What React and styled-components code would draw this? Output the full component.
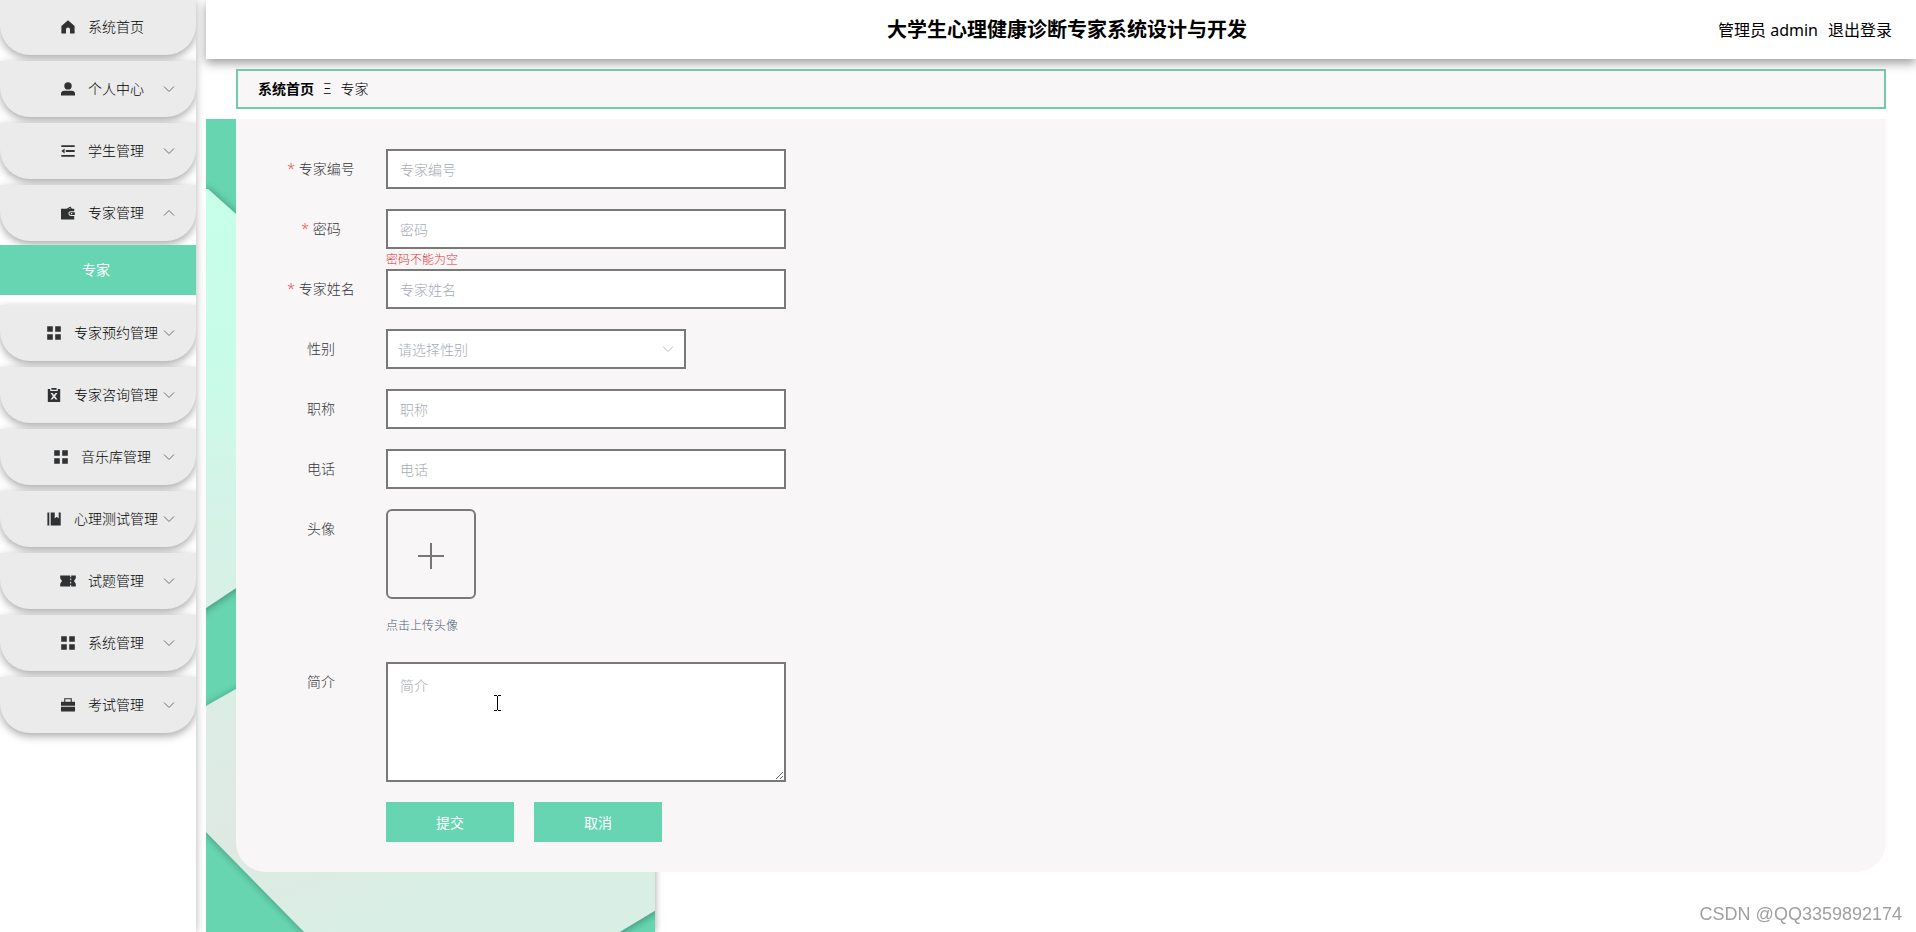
import { useState } from 'react';
import styled, { createGlobalStyle } from 'styled-components';

const GlobalStyle = createGlobalStyle`
  * {
    box-sizing: border-box;
  }
  body {
    margin: 0;
    background: #fff;
    font-family: "Noto Sans", "Noto Sans CJK SC", sans-serif;
    font-size: 14px;
    font-weight: 300;
    color: #000;
  }
  button, input, select, textarea {
    font-family: inherit;
    font-size: 14px;
    font-weight: inherit;
  }
`;

const Page = styled.div`
  display: flex;
  gap: 10px;
  min-height: 100vh;
`;

const Sidebar = styled.nav`
  flex: 0 0 196px;
  overflow: hidden;
  background: #fff;
  box-shadow: 0 0 8px rgba(0, 0, 0, 0.3);
`;

const Menu = styled.ul`
  display: flex;
  flex-direction: column;
  gap: 6px;
  margin: -1px 0 0;
  padding: 0;
  list-style: none;
`;

const MenuButton = styled.button`
  display: grid;
  grid-template-columns: 1fr auto 1fr;
  align-items: center;
  width: 100%;
  height: 56px;
  padding: 0 21px 0 25px;
  border: 0;
  border-radius: 0 0 30px 30px;
  background: #ebebeb;
  box-shadow: 0 3px 8px rgba(0, 0, 0, 0.35);
  color: #000;
  cursor: pointer;
`;

const MenuLabel = styled.span`
  grid-column: 2;
  display: flex;
  align-items: center;
  gap: 13px;
  padding-left: 5px;
  line-height: 20px;
  white-space: nowrap;
`;

const Arrow = styled.svg`
  grid-column: 3;
  justify-self: end;
  width: 12px;
  height: 12px;
  margin-left: -12px;
  fill: none;
  stroke: #6c6f75;
  transform: rotate(${(props) => (props.$open ? '180deg' : '0')});
`;

const SubMenu = styled.ul`
  margin: 0;
  padding: 4px 0;
  list-style: none;
`;

const SubLink = styled.a`
  display: block;
  padding-right: 4px;
  line-height: 50px;
  text-align: center;
  text-decoration: none;
  font-weight: 400;
  color: #fff;
  background: #67d5b1;
`;

const Main = styled.div`
  flex: 1;
  display: flex;
  flex-direction: column;
  min-width: 0;
`;

const Header = styled.header`
  display: grid;
  grid-template-columns: 1fr auto 1fr;
  align-items: center;
  height: 59px;
  padding: 0 24px 0 36px;
  background: #fff;
  box-shadow: 0 4px 10px rgba(0, 0, 0, 0.4);
`;

const Title = styled.h1`
  grid-column: 2;
  margin: 0;
  font-size: 20px;
  line-height: 30px;
`;

const UserBar = styled.div`
  justify-self: end;
  display: flex;
  gap: 10px;
  font-size: 16px;
  font-weight: 400;
  line-height: 24px;
`;

const Logout = styled.a`
  color: inherit;
  text-decoration: none;
`;

const Breadcrumb = styled.nav`
  display: flex;
  align-items: center;
  gap: 9px;
  height: 40px;
  margin: 10px 30px;
  padding: 0 20px;
  border: 2px solid #74c9aa;
  background: #f8f6f7;
  line-height: 20px;
`;

const HomeLink = styled.a`
  font-weight: bold;
  color: inherit;
  text-decoration: none;
`;

const Workspace = styled.main`
  flex: 1;
  display: grid;
  grid-template-columns: minmax(0, 1fr);
  align-items: start;
`;

const Backdrop = styled.svg`
  grid-area: 1 / 1;
  width: 460px;
  height: 813px;
`;

const Card = styled.form`
  grid-area: 1 / 1;
  margin: 0 30px 60px;
  padding: 30px 20px;
  border-radius: 0 0 30px 30px;
  background: #f8f6f7;
`;

const Row = styled.div`
  display: grid;
  grid-template-columns: 130px minmax(0, 400px);
`;

const Label = styled.label`
  display: flex;
  justify-content: center;
  gap: 4px;
  height: 40px;
  line-height: 40px;
  color: #36383c;
`;

const Star = styled.span`
  color: #f0484a;
`;

const Hint = styled.div`
  height: 20px;
  font-size: 12px;
  line-height: 22px;
  color: #dc3338;
`;

const TextInput = styled.input`
  display: block;
  width: 100%;
  height: 40px;
  padding: 0 12px;
  border: 2px solid #797979;
  outline: 0;
  background: #fff;
  color: #36383c;
  &::placeholder {
    color: #a6abb5;
  }
`;

const SelectBox = styled.div`
  display: grid;
  align-items: center;
  width: 300px;
`;

const Select = styled.select`
  grid-area: 1 / 1;
  width: 100%;
  height: 40px;
  padding: 0 30px 0 10px;
  appearance: none;
  border: 2px solid #797979;
  border-radius: 0;
  outline: 0;
  background: #fff;
  color: ${(props) => (props.value ? '#36383c' : '#a6abb5')};
`;

const SelectArrow = styled(Arrow)`
  grid-area: 1 / 1;
  margin-right: 12px;
  stroke: #b4b8c0;
  pointer-events: none;
`;

const Upload = styled.button`
  display: flex;
  align-items: center;
  justify-content: center;
  width: 90px;
  height: 90px;
  padding: 4px 0 0;
  border: 2px solid #797979;
  border-radius: 6px;
  background: transparent;
  cursor: pointer;
`;

const UploadTip = styled.div`
  margin-top: 10px;
  font-size: 12px;
  line-height: 33px;
  color: #4f5d72;
`;

const AreaBox = styled.div`
  position: relative;
`;

const TextArea = styled.textarea`
  display: block;
  width: 100%;
  height: 120px;
  padding: 12px;
  border: 2px solid #797979;
  outline: 0;
  line-height: 20px;
  color: #36383c;
  &::placeholder {
    color: #a6abb5;
  }
`;

const Caret = styled.svg`
  position: absolute;
  left: 108px;
  top: 33px;
  width: 7px;
  height: 16px;
  pointer-events: none;
`;

const Actions = styled.div`
  display: flex;
  gap: 20px;
  padding-left: 130px;
`;

const ActionButton = styled.button`
  width: 128px;
  height: 40px;
  border: 0;
  background: #67d5b1;
  font-weight: 400;
  color: #fff;
  cursor: pointer;
`;

const Watermark = styled.div`
  position: fixed;
  right: 14px;
  bottom: 8px;
  font-family: "Liberation Sans", sans-serif;
  font-size: 18px;
  font-weight: 400;
  line-height: 20px;
  color: #a0a0a0;
`;

const icons = {
  home: <path d="M7 0.3 13.6 6v7.4H9V9.6a2 2 0 0 0-4 0v3.8H.4V6z" />,
  user: (
    <>
      <circle cx="7" cy="3.9" r="3.7" />
      <path d="M0 13.6v-1.8C0 10 1.4 8.8 3.2 8.8h7.6C12.6 8.8 14 10 14 11.8v1.8z" />
    </>
  ),
  fold: <path d="M.3 1.2h13.4v1.9H.3zM4.8 6h8.9v1.9H4.8zM.3 10.9h13.4v1.9H.3zM3.6 4.6v4.8L.4 7z" />,
  wallet: (
    <path
      fillRule="evenodd"
      d="M0 2.8h5.6L9.4.4l1.5 2.4h2.3v2.4h-3.4a2.3 2.3 0 0 0 0 4.8h3.4v3.4H0zM7.6 2.8h1.9L9 1.9zM9.8 6.2h4v2.8h-4a1.4 1.4 0 0 1 0-2.8zM10 7v1.2h1.2V7z"
    />
  ),
  grid: <path d="M.2.2h5.6v5.6H.2zM8.2.2h5.6v5.6H8.2zM.2 8.2h5.6v5.6H.2zM8.2 8.2h5.6v5.6H8.2z" />,
  release: (
    <path
      fillRule="evenodd"
      d="M4.4 0h5.2v1.7H4.4zM.8 1h2.4v1.9h7.6V1h2.4v13H.8zM3.5 5l2.4 3.2-2.4 3.3h2L7 9.5l1.5 2h2L8.1 8.2 10.5 5h-2L7 6.9 5.5 5z"
    />
  ),
  book: <path d="M.4.4h1.9v13.2H.4zM3.7.4h4v6l2-1.6 2 1.6v-6h2v13.2h-10z" />,
  ticket: (
    <path
      fillRule="evenodd"
      d="M-.8 1.4h10v1.8h1V1.4h4.6v2.8L13 7l1.8 2.8v2.8h-4.6v-1.8h-1v1.8h-10V9.8L1 7-.8 4.2zM9.2 4.6v1.7h1V4.6zM9.2 7.7v1.7h1V7.7z"
    />
  ),
  briefcase: (
    <path
      fillRule="evenodd"
      d="M3.2.2h7.6v3.6H14v4H0v-4h3.2zM4.3 1.3v2.5h5.4V1.3zM0 8.7h14v4.9H0z"
    />
  ),
};

const menus = [
  { icon: 'home', text: '系统首页', leaf: true },
  { icon: 'user', text: '个人中心' },
  { icon: 'fold', text: '学生管理' },
  { icon: 'wallet', text: '专家管理', children: ['专家'] },
  { icon: 'grid', text: '专家预约管理' },
  { icon: 'release', text: '专家咨询管理' },
  { icon: 'grid', text: '音乐库管理' },
  { icon: 'book', text: '心理测试管理' },
  { icon: 'ticket', text: '试题管理' },
  { icon: 'grid', text: '系统管理' },
  { icon: 'briefcase', text: '考试管理' },
];

function MenuIcon({ name }) {
  return (
    <svg width="14" height="14" viewBox="0 0 14 14" fill="#303133" overflow="visible" aria-hidden="true">
      {icons[name]}
    </svg>
  );
}

function Field({
  id, label, required, error, children,
}) {
  return (
    <Row>
      <Label htmlFor={id}>
        {required && <Star>*</Star>}
        {label}
      </Label>
      <div>
        {children}
        <Hint>{error}</Hint>
      </div>
    </Row>
  );
}

function GreenBackdrop() {
  return (
    <Backdrop viewBox="0 0 460 813" aria-hidden="true">
      <defs>
        <linearGradient id="mint" x1="0" y1="0" x2="0" y2="1">
          <stop offset="0" stopColor="#c6ffea" />
          <stop offset="0.4" stopColor="#c8fce9" />
          <stop offset="0.75" stopColor="#d5f3e8" />
          <stop offset="1" stopColor="#d9f0e7" />
        </linearGradient>
        <linearGradient id="pale" x1="0" y1="0.2" x2="0.3" y2="1">
          <stop offset="0" stopColor="#d9f1e8" />
          <stop offset="0.7" stopColor="#dfe9e4" />
          <stop offset="1" stopColor="#d9efe6" />
        </linearGradient>
        <filter id="soft" x="-20%" y="-20%" width="140%" height="140%">
          <feDropShadow dx="1" dy="1" stdDeviation="4" floodColor="#1c5c46" floodOpacity="0.6" />
        </filter>
        <filter id="edge" x="-10%" y="-10%" width="120%" height="120%">
          <feDropShadow dx="1" dy="0" stdDeviation="3" floodColor="#000" floodOpacity="0.3" />
        </filter>
        <clipPath id="sheet">
          <path d="M0 0h449v813H0z" />
        </clipPath>
      </defs>
      <path d="M0 0h449v813H0z" fill="#67d5b1" filter="url(#edge)" />
      <g clipPath="url(#sheet)">
        <path d="M-10 70 2 70 30 95 200 241V360L30 469 0 489l-10 7z" fill="url(#mint)" filter="url(#soft)" />
        <path d="M-10 592 0 587 30 570 460 325V785L402 820H105L0 713l-10-10z" fill="url(#pale)" filter="url(#soft)" />
      </g>
    </Backdrop>
  );
}

function App() {
  const [opened, setOpened] = useState('专家管理');
  const [data, setData] = useState({
    number: '',
    password: '',
    name: '',
    gender: '',
    title: '',
    phone: '',
    intro: '',
  });

  const handleChange = (e) => {
    setData({ ...data, [e.target.name]: e.target.value });
  };

  const renderInput = (name, placeholder, type = 'text') => (
    <TextInput
      id={name}
      type={type}
      name={name}
      placeholder={placeholder}
      value={data[name]}
      onChange={handleChange}
    />
  );

  return (
    <Page>
      <GlobalStyle />
      <Sidebar>
        <Menu>
          {menus.map((menu) => (
            <li key={menu.text}>
              <MenuButton
                type="button"
                onClick={() => setOpened(opened === menu.text ? '' : menu.text)}
              >
                <MenuLabel>
                  <MenuIcon name={menu.icon} />
                  {menu.text}
                </MenuLabel>
                {!menu.leaf && (
                  <Arrow viewBox="0 0 12 12" $open={opened === menu.text}>
                    <path d="M1 3.5 6 8.5 11 3.5" />
                  </Arrow>
                )}
              </MenuButton>
              {menu.children && opened === menu.text && (
                <SubMenu>
                  {menu.children.map((child) => (
                    <li key={child}><SubLink href="#expert">{child}</SubLink></li>
                  ))}
                </SubMenu>
              )}
            </li>
          ))}
        </Menu>
      </Sidebar>
      <Main>
        <Header>
          <Title>大学生心理健康诊断专家系统设计与开发</Title>
          <UserBar>
            <span>管理员 admin</span>
            <Logout href="#logout">退出登录</Logout>
          </UserBar>
        </Header>
        <Breadcrumb>
          <HomeLink href="#home">系统首页</HomeLink>
          <span>Ξ</span>
          <span>专家</span>
        </Breadcrumb>
        <Workspace>
          <GreenBackdrop />
          <Card onSubmit={(e) => e.preventDefault()}>
            <Field id="number" label="专家编号" required>
              {renderInput('number', '专家编号')}
            </Field>
            <Field id="password" label="密码" required error="密码不能为空">
              {renderInput('password', '密码', 'password')}
            </Field>
            <Field id="name" label="专家姓名" required>
              {renderInput('name', '专家姓名')}
            </Field>
            <Field id="gender" label="性别">
              <SelectBox>
                <Select id="gender" name="gender" value={data.gender} onChange={handleChange}>
                  <option value="">请选择性别</option>
                  <option value="男">男</option>
                  <option value="女">女</option>
                </Select>
                <SelectArrow viewBox="0 0 12 12">
                  <path d="M1 3.5 6 8.5 11 3.5" />
                </SelectArrow>
              </SelectBox>
            </Field>
            <Field id="title" label="职称">
              {renderInput('title', '职称')}
            </Field>
            <Field id="phone" label="电话">
              {renderInput('phone', '电话')}
            </Field>
            <Field id="avatar" label="头像">
              <Upload id="avatar" type="button">
                <svg width="26" height="26" viewBox="0 0 26 26" fill="none" stroke="#777" strokeWidth="2" aria-hidden="true">
                  <path d="M13 0v26M0 13h26" />
                </svg>
              </Upload>
              <UploadTip>点击上传头像</UploadTip>
            </Field>
            <Field id="intro" label="简介">
              <AreaBox>
                <TextArea
                  id="intro"
                  name="intro"
                  placeholder="简介"
                  value={data.intro}
                  onChange={handleChange}
                />
                <Caret viewBox="0 0 7 16" fill="none" stroke="#000" aria-hidden="true">
                  <path d="M0 .5h3M4 .5h3M3.5 1v14M0 15.5h3M4 15.5h3" />
                </Caret>
              </AreaBox>
            </Field>
            <Actions>
              <ActionButton type="submit">提交</ActionButton>
              <ActionButton type="button">取消</ActionButton>
            </Actions>
          </Card>
        </Workspace>
      </Main>
      <Watermark>CSDN @QQ3359892174</Watermark>
    </Page>
  );
}
export default App;
